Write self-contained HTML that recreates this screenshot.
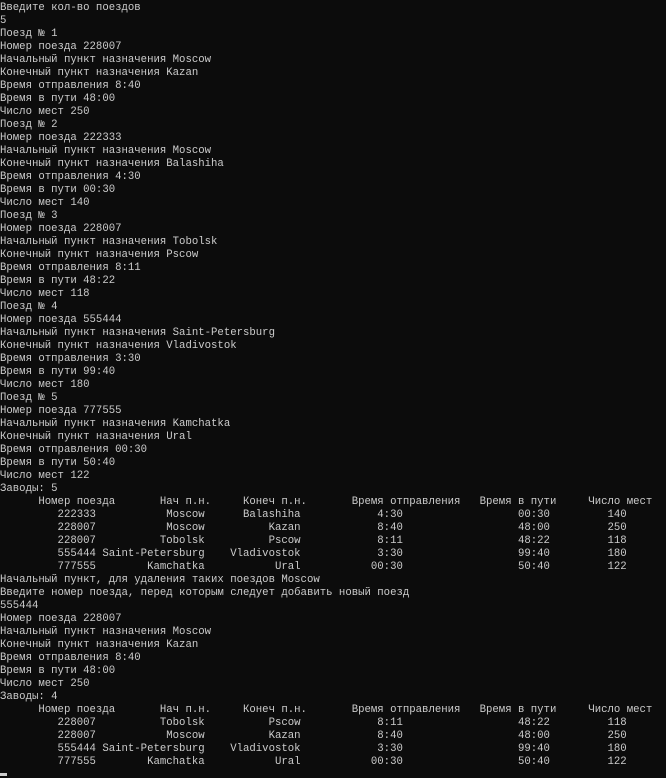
<!DOCTYPE html>
<html><head><meta charset="utf-8"><style>
html,body{margin:0;padding:0;background:#0c0c0c;width:666px;height:778px;overflow:hidden}
pre{margin:0;padding:2px 0 0 0;font-family:"Liberation Mono","DejaVu Sans Mono",monospace;font-size:10.67px;line-height:13px;color:#cccccc}
.cur{position:absolute;left:0;top:773px;width:7px;height:3px;background:#cccccc}
</style></head><body><pre>Введите кол-во поездов
5
Поезд № 1
Номер поезда 228007
Начальный пункт назначения Moscow
Конечный пункт назначения Kazan
Время отправления 8:40
Время в пути 48:00
Число мест 250
Поезд № 2
Номер поезда 222333
Начальный пункт назначения Moscow
Конечный пункт назначения Balashiha
Время отправления 4:30
Время в пути 00:30
Число мест 140
Поезд № 3
Номер поезда 228007
Начальный пункт назначения Tobolsk
Конечный пункт назначения Pscow
Время отправления 8:11
Время в пути 48:22
Число мест 118
Поезд № 4
Номер поезда 555444
Начальный пункт назначения Saint-Petersburg
Конечный пункт назначения Vladivostok
Время отправления 3:30
Время в пути 99:40
Число мест 180
Поезд № 5
Номер поезда 777555
Начальный пункт назначения Kamchatka
Конечный пункт назначения Ural
Время отправления 00:30
Время в пути 50:40
Число мест 122
Заводы: 5
      Номер поезда       Нач п.н.     Конеч п.н.       Время отправления   Время в пути     Число мест
         222333           Moscow      Balashiha            4:30                  00:30         140
         228007           Moscow          Kazan            8:40                  48:00         250
         228007          Tobolsk          Pscow            8:11                  48:22         118
         555444 Saint-Petersburg    Vladivostok            3:30                  99:40         180
         777555        Kamchatka           Ural           00:30                  50:40         122
Начальный пункт, для удаления таких поездов Moscow
Введите номер поезда, перед которым следует добавить новый поезд
555444
Номер поезда 228007
Начальный пункт назначения Moscow
Конечный пункт назначения Kazan
Время отправления 8:40
Время в пути 48:00
Число мест 250
Заводы: 4
      Номер поезда       Нач п.н.     Конеч п.н.       Время отправления   Время в пути     Число мест
         228007          Tobolsk          Pscow            8:11                  48:22         118
         228007           Moscow          Kazan            8:40                  48:00         250
         555444 Saint-Petersburg    Vladivostok            3:30                  99:40         180
         777555        Kamchatka           Ural           00:30                  50:40         122
</pre><div class="cur"></div></body></html>
